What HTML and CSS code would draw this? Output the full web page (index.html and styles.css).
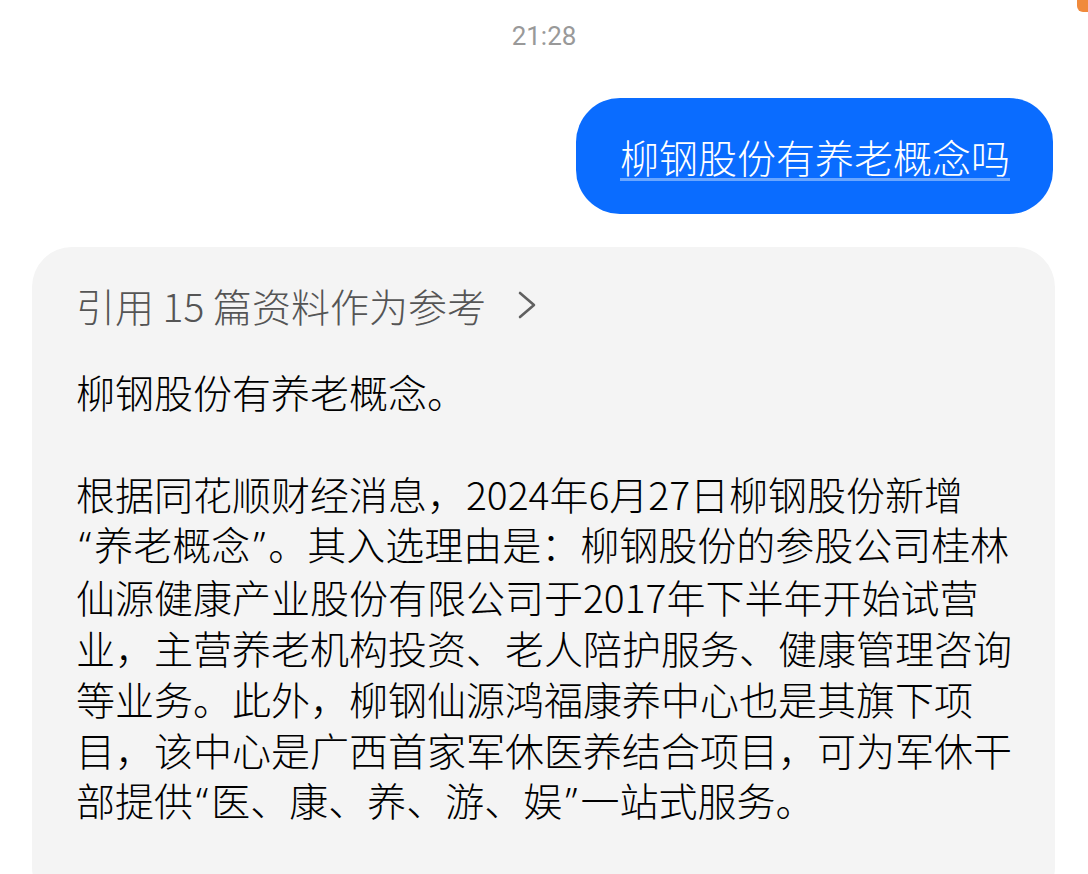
FILE: index.html
```html
<!DOCTYPE html>
<html lang="zh-CN">
<head>
    <meta charset="UTF-8">
    <title>柳钢股份有养老概念吗</title>
    <meta name="viewport" content="width=device-width, initial-scale=1.0">
    <link rel="stylesheet" href="styles.css">
</head>
<body>
    <div class="status-dot"></div>
    <div class="chat">
        <div class="time">21:28</div>

        <div class="row-user">
            <div class="bubble-user">
                <span class="bubble-text">柳钢股份有养老概念吗</span>
            </div>
        </div>

        <div class="answer">
            <div class="refs">
                <span>引用 15 篇资料作为参考</span>
                <svg class="chevron" width="22" height="28" viewBox="0 0 22 28">
                    <path d="M4 2 L18 14 L4 26" fill="none" stroke="#606060" stroke-width="2.6" stroke-linecap="round" stroke-linejoin="round"/>
                </svg>
            </div>
            <p class="answer-text summary">柳钢股份有养老概念。</p>
            <p class="answer-text">根据同花顺财经消息，2024年6月27日柳钢股份新增<span class="q">“</span>养老概念<span class="q">”</span>。其入选理由是：柳钢股份的参股公司桂林仙源健康产业股份有限公司于2017年下半年开始试营业，主营养老机构投资、老人陪护服务、健康管理咨询等业务。此外，柳钢仙源鸿福康养中心也是其旗下项目，该中心是广西首家军休医养结合项目，可为军休干部提供<span class="q">“</span>医、康、养、游、娱<span class="q">”</span>一站式服务。</p>
        </div>
    </div>
</body>
</html>
```

FILE: styles.css
```css
body {
    margin: 0;
    padding: 0;
    background-color: #fff;
    font-family: "Noto Sans CJK SC", "Noto Sans", sans-serif;
    color: #000;
    height: 874px;
    overflow: hidden;
    position: relative;
}

.status-dot {
    position: absolute;
    top: -10px;
    left: 1077px;
    width: 16px;
    height: 22px;
    border-radius: 6px;
    background-color: #f08a3c;
}

.chat {
    display: flex;
    flex-direction: column;
}

.time {
    text-align: center;
    font-family: Roboto, "Noto Sans", sans-serif;
    font-size: 26px;
    line-height: 32px;
    color: #999;
    padding-top: 20px;
}

.row-user {
    display: flex;
    justify-content: flex-end;
    padding-right: 35px;
    margin-top: 46px;
}

.bubble-user {
    background-color: #0a6cff;
    border-radius: 44px;
    height: 116px;
    padding: 0 43px 0 44px;
    display: flex;
    align-items: center;
}

.bubble-text {
    color: #fff;
    font-size: 39px;
    font-weight: 300;
    line-height: 50px;
    text-decoration: underline;
    text-decoration-color: #6aa6ff;
    text-decoration-thickness: 3px;
    text-underline-offset: 5px;
}

.answer {
    margin: 33px 33px 0 32px;
    background-color: #f4f4f4;
    border-radius: 40px;
    padding: 33px 39px 80px 44px;
}

.refs {
    display: flex;
    align-items: center;
    font-size: 39px;
    font-weight: 300;
    line-height: 50px;
    color: #555;
}

.chevron {
    margin-left: 30px;
}

.answer-text {
    margin: 0;
    font-size: 39px;
    font-weight: 300;
    line-height: 50.8px;
    color: #000;
}

.summary {
    margin-top: 36px;
    margin-bottom: 50.8px;
}

.q {
    font-family: "Noto Sans", sans-serif;
    padding: 0 3px;
}
```
